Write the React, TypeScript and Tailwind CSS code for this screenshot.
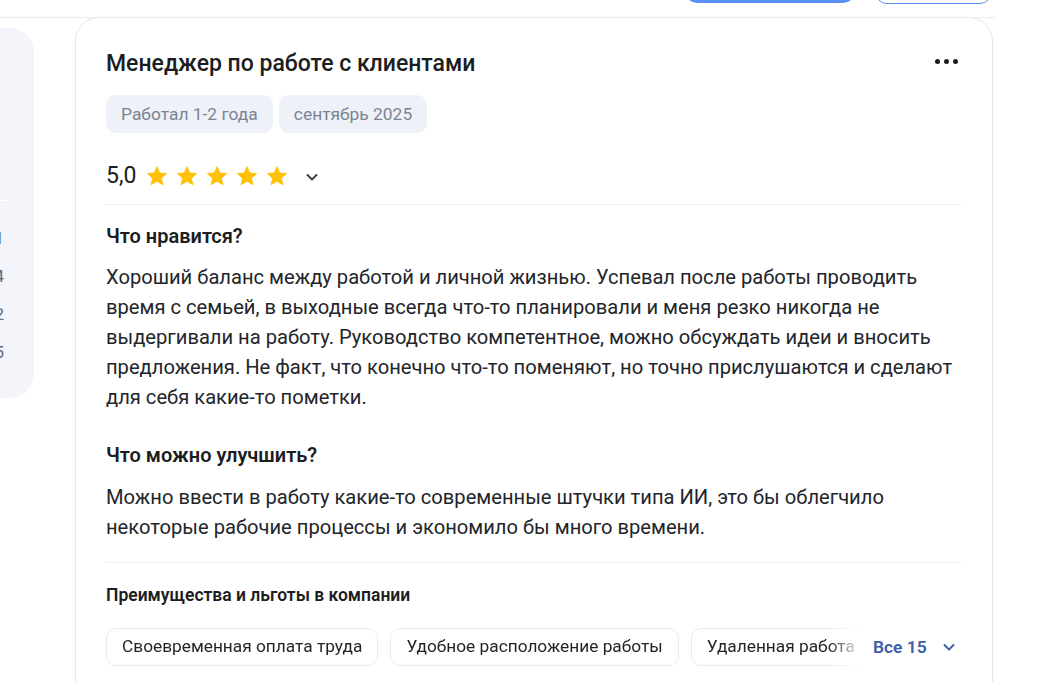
import React from "react";

const Star: React.FC = () => (
    <svg width="24" height="24" viewBox="0 0 24 24" className="shrink-0">
        <path
            d="M12 1.8l3 6.8 7.4.7-5.6 4.9 1.7 7.3L12 17.7l-6.5 3.8 1.7-7.3-5.6-4.9 7.4-.7L12 1.8z"
            fill="#FFC107"
        />
    </svg>
);

const Chevron: React.FC<{ color: string }> = ({ color }) => (
    <svg width="16" height="16" viewBox="0 0 16 16" fill="none">
        <path d="M3.5 6l4.5 4.5L12.5 6" stroke={color} strokeWidth="1.9" strokeLinecap="round" strokeLinejoin="round" />
    </svg>
);

const perks = ["Своевременная оплата труда", "Удобное расположение работы", "Удаленная работа"];

const App: React.FC = () => {
    return (
        <div
            className="w-[1037px] h-[682px] overflow-hidden bg-white text-[#1b1d21]"
            style={{ fontFamily: "Roboto, 'Noto Sans', sans-serif" }}
        >
            {/* top bar, scrolled mostly out of view */}
            <div className="w-[995px] h-[18px] border-b border-[#e9ecf3] relative">
                <div className="absolute left-[685px] top-[-37px] w-[170px] h-[40px] rounded-[12px] bg-[#5b8ff9]" />
                <div className="absolute left-[875px] top-[-37px] w-[117px] h-[41px] rounded-[12px] border border-[#5b8ff9] bg-white" />
            </div>

            <div className="flex items-start gap-[41px]">
                {/* left sidebar, clipped */}
                <div className="w-[34px] mt-[10px] h-[370px] bg-[#f3f5fa] rounded-r-[24px] overflow-hidden flex flex-col">
                    <div className="h-[172px]" />
                    <div className="h-px bg-white mr-[22px]" />
                    <div className="flex flex-col text-[17px] text-[#5f6b80] pt-[26px] gap-[15px] leading-[23px]">
                        {["1", "4", "2", "5"].map((n) => (
                            <div key={n} className="flex justify-end pr-[30px] whitespace-nowrap">
                                {n}
                            </div>
                        ))}
                    </div>
                </div>

                {/* review card */}
                <div className="w-[918px] h-[700px] -mt-px border border-[#e2e6ee] rounded-[24px] pl-[30px] pr-[30px] pt-[31px]">
                    <div className="flex items-center justify-between">
                        <h2 className="text-[23px] font-medium leading-[30px]">Менеджер по работе с клиентами</h2>
                        <div className="flex gap-[4px] mr-[4px] mb-[6px]">
                            <span className="w-[5px] h-[5px] rounded-full bg-[#1b1d21]" />
                            <span className="w-[5px] h-[5px] rounded-full bg-[#1b1d21]" />
                            <span className="w-[5px] h-[5px] rounded-full bg-[#1b1d21]" />
                        </div>
                    </div>

                    <div className="flex gap-[6px] mt-[16px]">
                        <span className="h-[38px] px-[15px] flex items-center rounded-[10px] bg-[#eef1f7] text-[17.4px] text-[#7b8494]">
                            Работал 1-2 года
                        </span>
                        <span className="h-[38px] px-[15px] flex items-center rounded-[10px] bg-[#eef1f7] text-[17.4px] text-[#7b8494]">
                            сентябрь 2025
                        </span>
                    </div>

                    <div className="flex items-center mt-[26px] h-[34px]">
                        <span className="text-[23px] leading-[30px] mr-[9px]">5,0</span>
                        <div className="flex gap-[6px]">
                            <Star />
                            <Star />
                            <Star />
                            <Star />
                            <Star />
                        </div>
                        <span className="ml-[15px] mt-[1px]">
                            <Chevron color="#3a3f47" />
                        </span>
                    </div>

                    <div className="h-px bg-[#eceef3] mt-[11px]" />

                    <h3 className="text-[20px] font-semibold leading-[26px] mt-[18px]">Что нравится?</h3>
                    <p className="text-[20.15px] leading-[30px] mt-[13px] text-[#22252a]">
                        Хороший баланс между работой и личной жизнью. Успевал после работы проводить время с
                        семьей, в выходные всегда что-то планировали и меня резко никогда не выдергивали на
                        работу. Руководство компетентное, можно обсуждать идеи и вносить предложения. Не факт,
                        что конечно что-то поменяют, но точно прислушаются и сделают для себя какие-то пометки.
                    </p>

                    <h3 className="text-[20px] font-semibold leading-[26px] mt-[30px]">Что можно улучшить?</h3>
                    <p className="text-[20.15px] leading-[30px] mt-[14px] text-[#22252a]">
                        Можно ввести в работу какие-то современные штучки типа ИИ, это бы облегчило
                        <br />
                        некоторые рабочие процессы и экономило бы много времени.
                    </p>

                    <div className="h-px bg-[#eceef3] mt-[20px]" />

                    <h4 className="text-[17.5px] font-semibold leading-[24px] mt-[20px]">
                        Преимущества и льготы в компании
                    </h4>

                    <div className="flex items-center mt-[21px]">
                        <div
                            className="flex gap-[12px] overflow-hidden w-[756px] shrink-0"
                            style={{
                                maskImage: "linear-gradient(to right, black 722px, transparent 756px)",
                                WebkitMaskImage: "linear-gradient(to right, black 722px, transparent 756px)",
                            }}
                        >
                            {perks.map((p) => (
                                <span
                                    key={p}
                                    className="h-[38px] px-[15px] flex items-center shrink-0 whitespace-nowrap rounded-[10px] border border-[#e8ebf2] text-[17.3px] text-[#1f2227]"
                                >
                                    {p}
                                </span>
                            ))}
                        </div>
                        <button className="flex items-center ml-[11px] gap-[14px] text-[17.4px] font-semibold text-[#3a5ea8]">
                            Все 15
                            <Chevron color="#3a5ea8" />
                        </button>
                    </div>
                </div>
            </div>
        </div>
    );
};

export default App;
